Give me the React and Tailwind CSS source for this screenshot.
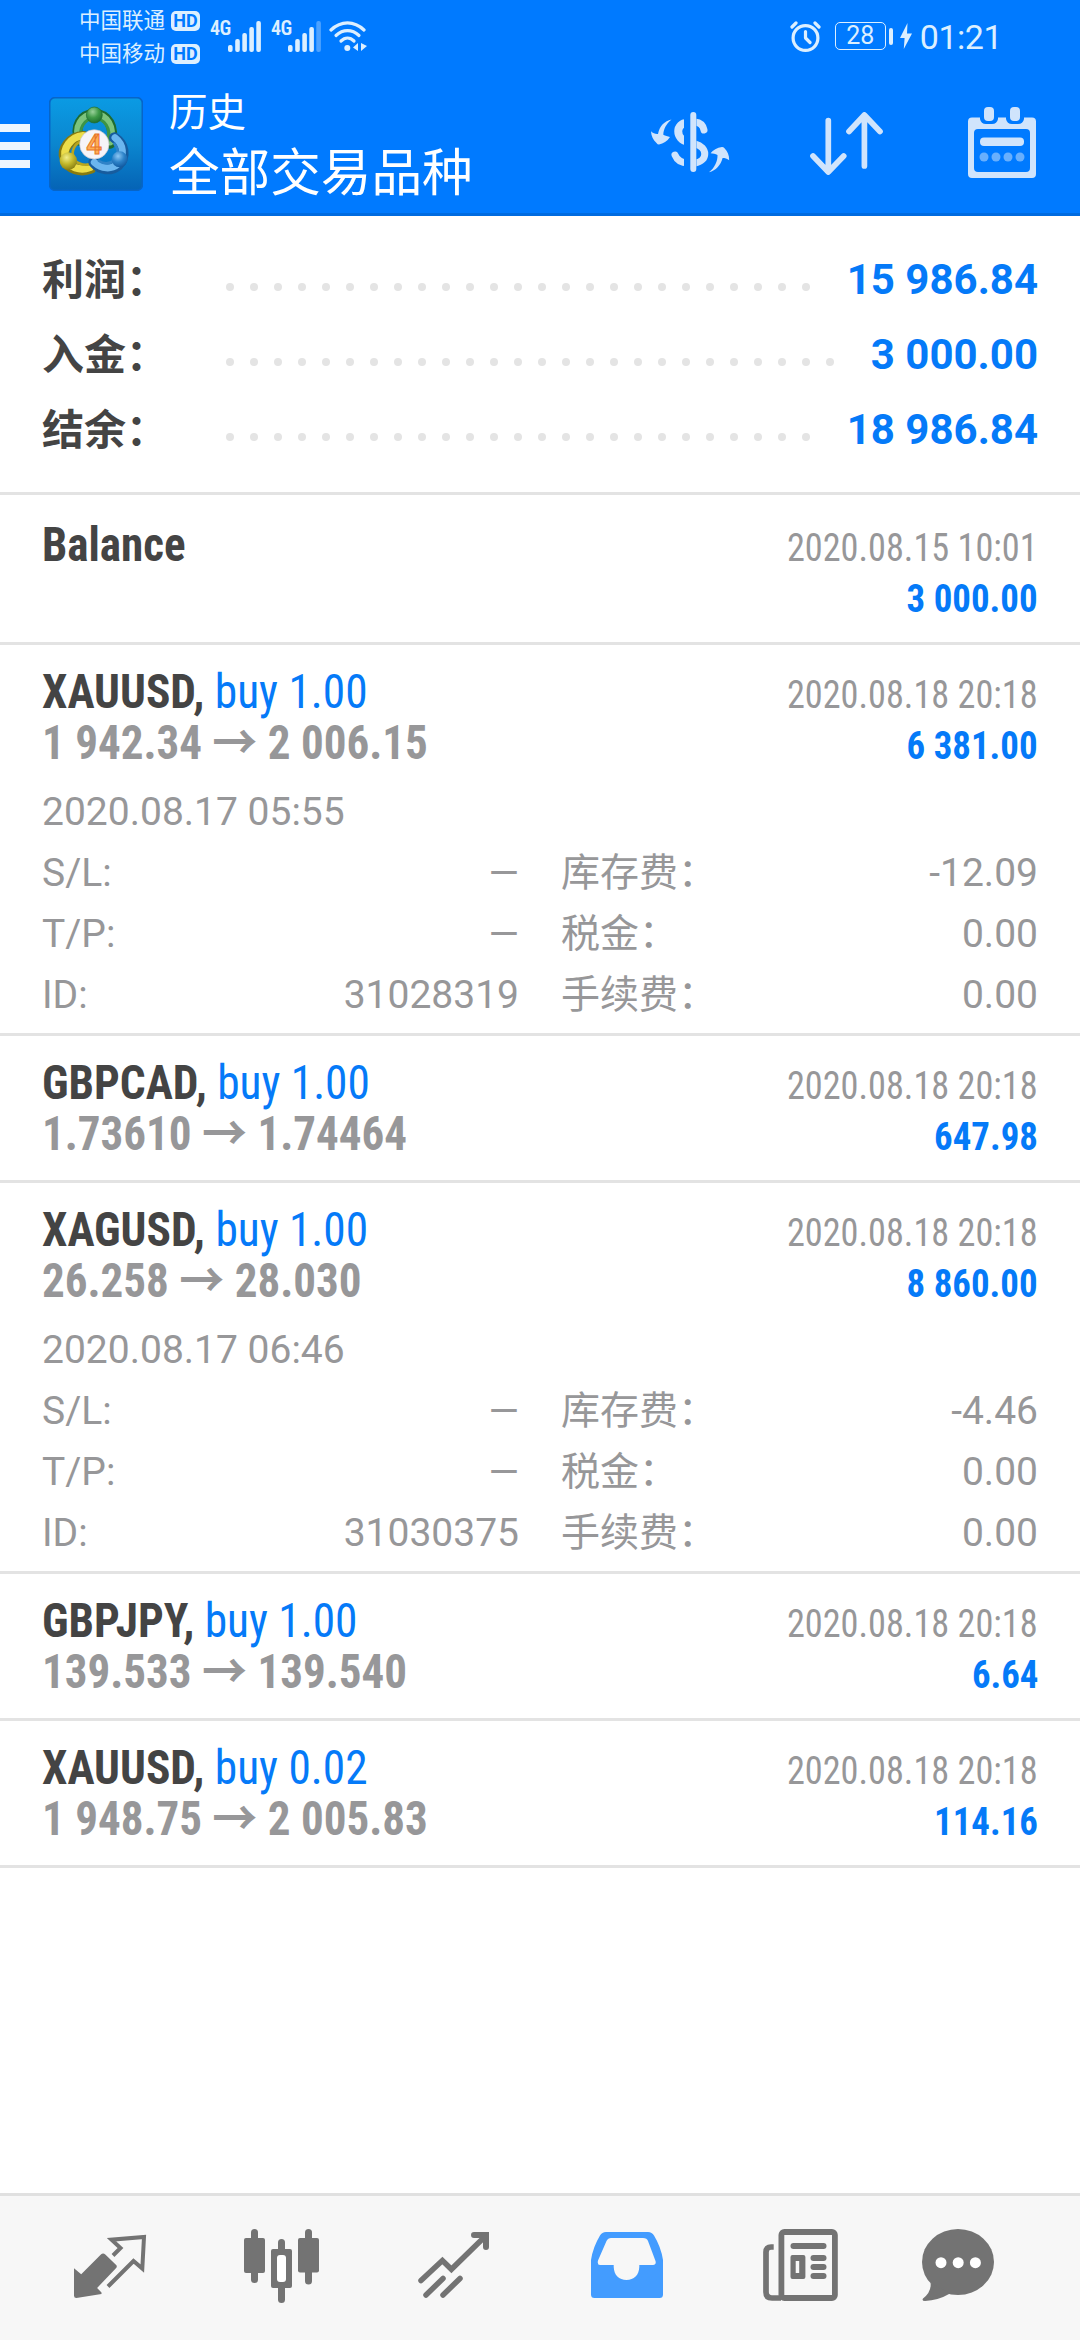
const summary = [
  { label: "利润：", value: "15 986.84", dots: 25 },
  { label: "入金：", value: "3 000.00", dots: 26 },
  { label: "结余：", value: "18 986.84", dots: 25 },
];

const deals = [
  {
    symbol: "XAUUSD,",
    type: "buy 1.00",
    open: "1 942.34",
    close: "2 006.15",
    time: "2020.08.18 20:18",
    profit: "6 381.00",
    details: { time: "2020.08.17 05:55", id: "31028319", swap: "-12.09" },
  },
  {
    symbol: "GBPCAD,",
    type: "buy 1.00",
    open: "1.73610",
    close: "1.74464",
    time: "2020.08.18 20:18",
    profit: "647.98",
  },
  {
    symbol: "XAGUSD,",
    type: "buy 1.00",
    open: "26.258",
    close: "28.030",
    time: "2020.08.18 20:18",
    profit: "8 860.00",
    details: { time: "2020.08.17 06:46", id: "31030375", swap: "-4.46" },
  },
  {
    symbol: "GBPJPY,",
    type: "buy 1.00",
    open: "139.533",
    close: "139.540",
    time: "2020.08.18 20:18",
    profit: "6.64",
  },
  {
    symbol: "XAUUSD,",
    type: "buy 0.02",
    open: "1 948.75",
    close: "2 005.83",
    time: "2020.08.18 20:18",
    profit: "114.16",
  },
];

function Signal({ weak }) {
  return (
    <svg width="33" height="31" viewBox="0 0 33 31" fill="currentColor">
      <rect x="0" y="24" width="4.6" height="7" rx="2" />
      <rect x="7.2" y="18" width="4.6" height="13" rx="2" />
      <rect x="14.3" y="12" width="4.6" height="19" rx="2" />
      <rect x="21.3" y="6" width="4.6" height="25" rx="2" />
      <rect x="28.3" y="0" width="4.6" height="31" rx="2" opacity={weak ? 0.35 : 1} />
    </svg>
  );
}

function Carrier({ name }) {
  return (
    <div className="flex items-center h-[33px]">
      <span className="text-[21.5px] leading-[33px]">{name}</span>
      <span className="ml-[6px] w-[29px] h-[20px] rounded-[5px] bg-[#dcefff] text-[#007aff] text-[18px] leading-[20px] font-bold text-center">
        HD
      </span>
    </div>
  );
}

function StatusBar() {
  return (
    <div className="h-[72px] flex justify-between pl-[79px] pr-[78px] text-[#dcefff]">
      <div className="flex">
        <div className="pt-[4px]">
          <Carrier name="中国联通" />
          <Carrier name="中国移动" />
        </div>

        <div className="flex items-start pt-[21px] ml-[10px]">
          <span className="w-[18px] text-[20px] leading-[14px] font-semibold font-['Roboto_Condensed'] tracking-[-0.5px]">4G</span>
          <Signal />
          <span className="w-[17px] ml-[10px] text-[20px] leading-[14px] font-semibold font-['Roboto_Condensed'] tracking-[-0.5px]">4G</span>
          <Signal weak />

          {/* Wifi */}
          <svg className="ml-[8px]" width="38" height="31" viewBox="0 0 38 31" fill="none" stroke="currentColor" strokeWidth="3.2" strokeLinecap="round">
            <path d="M2 9C12 -0.5 25 -0.5 35 9" />
            <path d="M7 14.5C14 8 23 8 30 14.5" />
            <path d="M12 20C16 16 21 16 25 20" />
            <circle cx="18.3" cy="27" r="3" fill="currentColor" stroke="none" />
            <path d="M29 22v8l-5-3.5zM32 22v8l6-5z" fill="currentColor" stroke="none" />
          </svg>
        </div>
      </div>

      <div className="flex items-center">
        {/* Alarm */}
        <svg width="31" height="31" viewBox="0 0 31 31" fill="none" stroke="currentColor" strokeWidth="3.2" strokeLinecap="round" strokeLinejoin="round">
          <circle cx="15.5" cy="17" r="12.4" />
          <path d="M15.5 10.5V17L20 21.5M2 6L6 2M29 6L25 2" />
        </svg>

        {/* Battery */}
        <div className="ml-[14px] w-[51px] h-[28px] rounded-[5px] border-[1.5px] border-[#dcefff] text-[25px] leading-[25px] text-center">
          28
        </div>
        <div className="ml-[3px] w-[4px] h-[17px] rounded-full bg-[#dcefff]" />
        <svg className="ml-[7px]" width="12" height="26" viewBox="0 0 12 26" fill="currentColor">
          <path d="M7.5 0L0 15H4.6L3.8 26L12 10.5H7z" />
        </svg>
        <span className="ml-[8px] pt-[2px] text-[34px] leading-[72px] tracking-[-0.5px]">01:21</span>
      </div>
    </div>
  );
}

function Logo() {
  return (
    <svg width="94" height="94" viewBox="0 0 282 282">
      <defs>
        <linearGradient id="tile" x1="0" y1="0" x2="0" y2="1">
          <stop offset="0" stopColor="#0a9be4" />
          <stop offset="0.5" stopColor="#0b86cf" />
          <stop offset="1" stopColor="#0563b5" />
        </linearGradient>
        <radialGradient id="green" cx="0.4" cy="0.3" r="0.75">
          <stop offset="0" stopColor="#9ad19a" />
          <stop offset="0.5" stopColor="#3f9a48" />
          <stop offset="1" stopColor="#1a6a2c" />
        </radialGradient>
        <radialGradient id="yellow" cx="0.4" cy="0.3" r="0.75">
          <stop offset="0" stopColor="#f2ee8a" />
          <stop offset="0.5" stopColor="#c4b92c" />
          <stop offset="1" stopColor="#857b12" />
        </radialGradient>
        <radialGradient id="blue" cx="0.4" cy="0.3" r="0.75">
          <stop offset="0" stopColor="#8cc8f5" />
          <stop offset="0.5" stopColor="#2d83c9" />
          <stop offset="1" stopColor="#0e559c" />
        </radialGradient>
      </defs>
      <rect x="2" y="2" width="278" height="278" rx="16" fill="url(#tile)" stroke="#0765c8" strokeWidth="5" />

      <g fill="none" strokeLinecap="round">
        <path d="M92 132C74 88 96 52 136 50C176 52 200 88 184 140" stroke="#1f6b30" strokeWidth="30" />
        <path d="M92 128C76 90 98 54 136 52C174 54 196 90 183 134" stroke="#7cc47c" strokeWidth="22" />
        <path d="M98 128C88 96 104 66 136 64C168 66 186 94 178 130" stroke="#3d9447" strokeWidth="9" />
        <path d="M104 118C62 120 36 158 48 186C56 216 96 226 126 214" stroke="#877a10" strokeWidth="32" />
        <path d="M102 116C64 120 40 156 50 184C58 212 94 222 122 212" stroke="#ecdd4a" strokeWidth="22" />
        <path d="M98 132C74 142 66 164 74 184C82 200 104 206 120 202" stroke="#b8a51e" strokeWidth="8" />
        <path d="M196 122C226 142 232 178 208 204C186 222 154 220 134 196" stroke="#175c9e" strokeWidth="32" />
        <path d="M198 122C224 142 228 176 206 202C186 218 158 216 136 196" stroke="#6bb6ef" strokeWidth="21" />
        <path d="M196 140C210 158 210 178 194 192C178 202 162 200 150 192" stroke="#2f83c8" strokeWidth="8" />
      </g>

      <circle cx="136" cy="54" r="24" fill="url(#green)" stroke="#1f6b30" strokeWidth="2" />
      <circle cx="58" cy="192" r="26" fill="url(#yellow)" />
      <circle cx="212" cy="187" r="24" fill="url(#blue)" />
      <circle cx="136" cy="142" r="44" fill="#f6f4f8" stroke="#c9c4cc" strokeWidth="2" />
      <text x="135" y="171" textAnchor="middle" fontFamily="Roboto" fontWeight="700" fontSize="82" fill="#ffae55" stroke="#e8742a" strokeWidth="3">
        4
      </text>
    </svg>
  );
}

function Header() {
  return (
    <header className="h-[216px] bg-[#007aff] border-b-[3px] border-[#006be0]">
      <StatusBar />

      <div className="h-[144px] flex items-start">
        <div className="mt-[52px] w-[30px] flex flex-col gap-[10px]">
          <div className="h-[8px] bg-[#eef6ff]" />
          <div className="h-[8px] bg-[#eef6ff]" />
          <div className="h-[8px] bg-[#eef6ff]" />
        </div>

        <div className="ml-[19px] mt-[25px]">
          <Logo />
        </div>

        <div className="ml-[26px] mt-[13px] w-[482px] text-white">
          <div className="text-[38.5px] leading-[56px]">历史</div>
          <div className="text-[50.6px] leading-[66px]">全部交易品种</div>
        </div>

        {/* Symbol filter */}
        <svg className="mt-[40px]" width="79" height="61" viewBox="0 0 79 61" fill="#d0e4fc">
          <path d="M20.5 7.5C15 12 12.5 17.5 12.3 22.8C14.5 24 16.5 24.5 19 25C16 29.5 12.5 31.5 8 32.5Q6.5 32.5 5.5 31C2 28 0.3 24 0 19.3C2 21.3 4.5 22.3 7 22C8.5 14 13.5 9 20.5 7.5Z" />
          <path d="M58 60.3C63.5 56 66.8 49 66.5 43C64.5 42 62 41.6 59.6 41.3C62 38 66 35.6 71 35Q72.5 35 73.5 36.3C76.6 39.5 78.2 43 78.2 48.2C76 46.6 74 46 71.6 46C69.5 53.5 65 58.5 58 60.3Z" />
          <g fill="none" stroke="#d0e4fc" strokeLinecap="round">
            <path d="M37 11C24 10 24 28 37 29.5" strokeWidth="8" />
            <path d="M24 43C26 48 30 51 37 51" strokeWidth="7" />
            <path d="M44 10C49 10.5 52 13 53 18" strokeWidth="7" />
            <path d="M44 32C57 35 57 49 44 51" strokeWidth="7" />
          </g>
          <rect x="33" y="4" width="12.5" height="52" fill="#007aff" />
          <rect x="39.3" y="0" width="6" height="60" rx="3" />
        </svg>

        {/* Sort */}
        <svg className="ml-[80px] mt-[40px]" width="74" height="63" viewBox="0 0 74 63" fill="none" stroke="#d0e4fc" strokeWidth="5.7" strokeLinecap="round" strokeLinejoin="round">
          <path d="M18.3 8.5V59M3 44L18.3 60L33.7 44" />
          <path d="M54.4 54V4M39 19.5L54.4 3L70 19.5" />
        </svg>

        {/* Calendar */}
        <svg className="ml-[84px] mt-[35px]" width="68" height="72" viewBox="0 0 68 72" fill="#d0e4fc">
          <path
            fillRule="evenodd"
            d="M4 10.5H12V12Q13 17 18 17H24Q29 17 30 12V10.5H38V12Q39 17 44 17H50Q55 17 56 12V10.5H64Q68 10.5 68 14.5V67Q68 71 64 71H4Q0 71 0 67V14.5Q0 10.5 4 10.5ZM10 22Q6 22 6 26V61Q6 65 10 65H58Q62 65 62 61V26Q62 22 58 22Z"
          />
          <rect x="16" y="0" width="10" height="14" rx="4" />
          <rect x="42" y="0" width="10" height="14" rx="4" />
          <rect x="12" y="30.5" width="44" height="8.5" rx="4" />
          <g opacity="0.5">
            <circle cx="16" cy="50" r="4.5" />
            <circle cx="28" cy="50" r="4.5" />
            <circle cx="40" cy="50" r="4.5" />
            <circle cx="52" cy="50" r="4.5" />
          </g>
        </svg>
      </div>
    </header>
  );
}

function Summary() {
  return (
    <section className="h-[279px] pt-[26px] px-[42px] border-b-[3px] border-[#e3e3e3] font-bold text-[42px]">
      {summary.map((row) => (
        <div key={row.label} className="h-[75px] flex items-baseline leading-[75px]">
          <span className="w-[184px] text-[#444444] translate-y-[1px]">{row.label}</span>

          {/* Dotted leader */}
          <div className="flex gap-[16px] self-start mt-[41px]">
            {Array.from({ length: row.dots }).map((_, i) => (
              <span key={i} className="w-[8px] h-[8px] rounded-full bg-[#e4e4e4]" />
            ))}
          </div>

          <span className="ml-auto text-[#057af8]">{row.value}</span>
        </div>
      ))}
    </section>
  );
}

function DealTime({ children }) {
  return (
    <span className="inline-block origin-right scale-x-[0.93] text-[39px] text-[#979799]">{children}</span>
  );
}

function DealProfit({ children }) {
  return (
    <span className="inline-block origin-right scale-x-[0.945] text-[39px] font-bold text-[#057af8]">{children}</span>
  );
}

function DetailRow({ label, value }) {
  return (
    <div className="flex justify-between">
      <span>{label}</span>
      <span>{value}</span>
    </div>
  );
}

function Deal({ deal }) {
  const { details } = deal;

  return (
    <div className="px-[42px] pt-[21px] border-b-[3px] border-[#e3e3e3]">
      <div className="font-['Roboto_Condensed','Roboto',sans-serif]">
        <div className="h-[51px] flex justify-between items-baseline leading-[51px]">
          <div className="text-[48px] origin-left scale-x-[0.945]">
            <span className="font-bold text-[#444444]">{deal.symbol}</span>{" "}
            <span className="text-[#057af8]">{deal.type}</span>
          </div>
          <DealTime>{deal.time}</DealTime>
        </div>

        <div className="h-[51px] flex justify-between items-baseline leading-[51px]">
          <span className="text-[48px] origin-left scale-x-[0.938] font-bold text-[#979799]">
            {deal.open} <span className="font-['Roboto','Noto_Sans_CJK_SC',sans-serif]">→</span> {deal.close}
          </span>
          <DealProfit>{deal.profit}</DealProfit>
        </div>
      </div>

      {details ? (
        <div className="pt-[14px] pb-[7px] text-[39px] leading-[61px] text-[#979799]">
          <div>{details.time}</div>
          <div className="grid grid-cols-2 gap-x-[42px]">
            <DetailRow label="S/L:" value="—" />
            <DetailRow label="库存费：" value={details.swap} />
            <DetailRow label="T/P:" value="—" />
            <DetailRow label="税金：" value="0.00" />
            <DetailRow label="ID:" value={details.id} />
            <DetailRow label="手续费：" value="0.00" />
          </div>
        </div>
      ) : (
        <div className="h-[21px]" />
      )}
    </div>
  );
}

function BottomNav() {
  return (
    <nav className="h-[147px] flex items-start pl-[74px] pt-[33px] bg-[#f7f7f7] border-t-[3px] border-[#e0e0e0] text-[#737373]">
      {/* Quotes */}
      <svg width="73" height="74" viewBox="0 0 73 74" fill="currentColor">
        <path d="M0 39.3L7.2 45.3L26.9 25.5Q29.1 23.5 31.3 25.5L42.4 36.3Q43.2 37.5 42.4 38.7L23.1 59L27.5 63.5V65L2.4 69Q0 69 0 66.7Z" />
        <path d="M39 26.5L46.5 19L37.5 10.7L70 8L68.3 39.5L59.5 32L34 57.5" fill="none" stroke="currentColor" strokeWidth="4" />
      </svg>

      {/* Charts */}
      <svg className="ml-[97px]" width="75" height="74" viewBox="0 0 75 74" fill="currentColor">
        <rect x="7" y="0" width="7" height="54" rx="3.5" />
        <rect x="0" y="9" width="21" height="35" rx="2" />
        <rect x="61" y="0" width="7" height="55.5" rx="3.5" />
        <rect x="54" y="9" width="21" height="34.5" rx="2" />
        <rect x="34" y="10" width="7" height="64" rx="3.5" />
        <rect x="27" y="20" width="21" height="39" rx="2" />
        <rect x="33" y="26" width="9" height="27" rx="3" fill="#ffffff" />
      </svg>

      {/* Trade */}
      <svg className="ml-[99px]" width="72" height="74" viewBox="0 0 72 74" fill="none" stroke="currentColor" strokeWidth="5.5" strokeLinecap="round">
        <path d="M3 51.5L24.4 31.5L33.4 40.3L67.5 7" />
        <path d="M56 6H68V18" strokeWidth="6" />
        <path d="M8 66L25 49.5M25 66L42 49.5" />
      </svg>

      {/* History */}
      <svg className="ml-[101px] text-[#439cff]" width="73" height="74" viewBox="0 0 73 74" fill="currentColor">
        <path
          fillRule="evenodd"
          d="M15 3H57Q61 3 63 6.5Q70 18 72 31V65.5Q72 69 68.5 69H3.5Q0 69 0 65.5V31Q2 18 9 6.5Q11 3 15 3ZM20 9Q17 9 15.5 12L7 31.5Q6 36 9 36H22.7V38C23 46 28 51 35.5 51C43 51 48 46 48.3 38V36H62Q65.5 36 64.5 32L57 12Q56 9 52 9Z"
        />
      </svg>

      {/* News */}
      <svg className="ml-[99px]" width="75" height="74" viewBox="0 0 75 74" fill="currentColor">
        <path d="M10.7 18H8Q3 18 3 23V63Q3 69 9 69H18" fill="none" stroke="currentColor" strokeWidth="5.7" />
        <rect x="18.4" y="3" width="53.5" height="66" rx="3" fill="none" stroke="currentColor" strokeWidth="5.8" />
        <rect x="27.5" y="14" width="36" height="6" rx="3" />
        <path fillRule="evenodd" d="M29.5 26H40.4Q42.4 26 42.4 28V48Q42.4 50 40.4 50H29.5Q27.5 50 27.5 48V28Q27.5 26 29.5 26ZM32.7 32V44H36.2V32Z" />
        <rect x="47.5" y="26" width="16" height="6" rx="3" />
        <rect x="47.5" y="35" width="16" height="6" rx="3" />
        <rect x="47.5" y="44" width="16" height="6" rx="3" />
      </svg>

      {/* Chat */}
      <svg className="ml-[84px]" width="73" height="74" viewBox="0 0 73 74" fill="currentColor">
        <ellipse cx="36" cy="33" rx="36" ry="33" />
        <path d="M8.6 54Q9.5 63 1 69.5Q-0.5 72 3 72Q16 71.5 28 64.5Z" />
        <g fill="#ffffff">
          <circle cx="19" cy="33.7" r="5.5" />
          <circle cx="36.2" cy="33.7" r="5.5" />
          <circle cx="53.4" cy="33.7" r="5.5" />
        </g>
      </svg>
    </nav>
  );
}

export default function App() {
  return (
    <div className="w-[1080px] h-[2340px] flex flex-col overflow-hidden bg-white whitespace-nowrap font-['Roboto','Noto_Sans_CJK_SC',sans-serif]">
      <Header />
      <Summary />

      <main className="flex-1">
        {/* Deposit */}
        <div className="h-[150px] pt-[24px] px-[42px] border-b-[3px] border-[#e3e3e3] leading-[51px] font-['Roboto_Condensed','Roboto',sans-serif]">
          <div className="h-[51px] flex justify-between items-baseline">
            <span className="origin-left scale-x-[0.938] text-[48px] font-bold text-[#444444]">Balance</span>
            <DealTime>2020.08.15 10:01</DealTime>
          </div>
          <div className="h-[51px] text-right text-[48px]">
            <DealProfit>3 000.00</DealProfit>
          </div>
        </div>

        {deals.map((deal, i) => (
          <Deal key={i} deal={deal} />
        ))}
      </main>

      <BottomNav />
    </div>
  );
}
